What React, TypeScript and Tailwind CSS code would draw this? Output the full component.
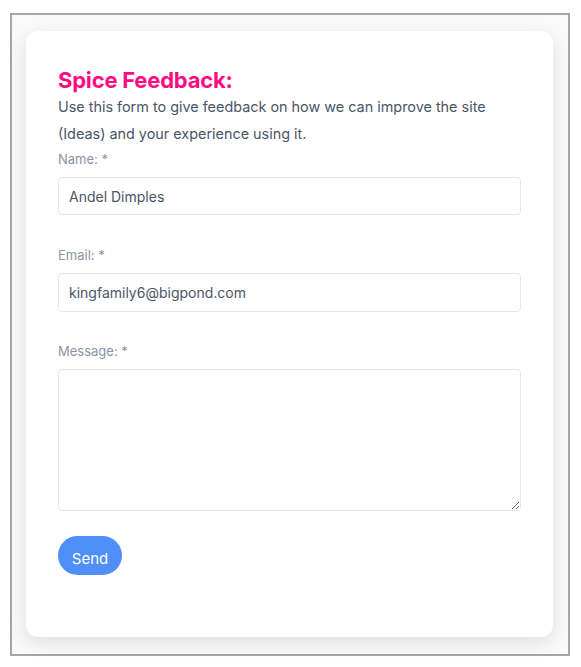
import { useState } from "react";

export default function App() {
  const [name, setName] = useState("Andel Dimples");
  const [email, setEmail] = useState("kingfamily6@bigpond.com");
  const [message, setMessage] = useState("");

  return (
    <div
      className="w-[581px] h-[667px] bg-white pt-[13px] pl-[10px]"
      style={{ fontFamily: "Inter, 'Noto Sans', sans-serif" }}
    >
      <div className="w-[560px] h-[643px] border-2 border-[#a6a6a6] bg-[#f9f9f9] pt-4 pl-[14px] pr-[15px] pb-[17px] flex">
        {/* card */}
        <div className="flex-1 bg-white rounded-xl shadow-[0_6px_18px_rgba(0,0,0,0.10)] pt-[30px] px-8">
          <h1 className="text-[22px] leading-8 font-bold text-[#ff0a82] tracking-[-0.2px] pt-[3px] -mb-[3px]">
            Spice Feedback:
          </h1>
          <p className="text-[14.4px] leading-[27px] text-[#4a5568]">
            Use this form to give feedback on how we can improve the site (Ideas) and your experience using it.
          </p>

          <form onSubmit={(e) => e.preventDefault()}>
            <label className="block text-[13px] leading-5 text-[#8a94a6] mt-[2px]">Name: *</label>
            <input
              value={name}
              onChange={(e) => setName(e.target.value)}
              className="mt-2 block w-full h-[38px] px-[10px] border border-[#e2e8f0] rounded text-[14px] text-[#4a5568] outline-none"
            />

            <label className="block text-[13px] leading-5 text-[#8a94a6] mt-[30px]">Email: *</label>
            <input
              value={email}
              onChange={(e) => setEmail(e.target.value)}
              className="mt-2 block w-full h-[39px] px-[10px] border border-[#e2e8f0] rounded text-[14px] text-[#4a5568] outline-none"
            />

            <label className="block text-[13px] leading-5 text-[#8a94a6] mt-[29px]">Message: *</label>
            <textarea
              value={message}
              onChange={(e) => setMessage(e.target.value)}
              className="mt-2 block w-full h-[142px] px-[10px] py-2 border border-[#e2e8f0] rounded text-[14px] text-[#4a5568] outline-none"
            />

            <button
              type="submit"
              className="mt-[25px] w-16 h-[39px] rounded-full bg-[#4f8ff7] text-white text-[15px] pt-[8px]"
            >
              Send
            </button>
          </form>
        </div>
      </div>
    </div>
  );
}
